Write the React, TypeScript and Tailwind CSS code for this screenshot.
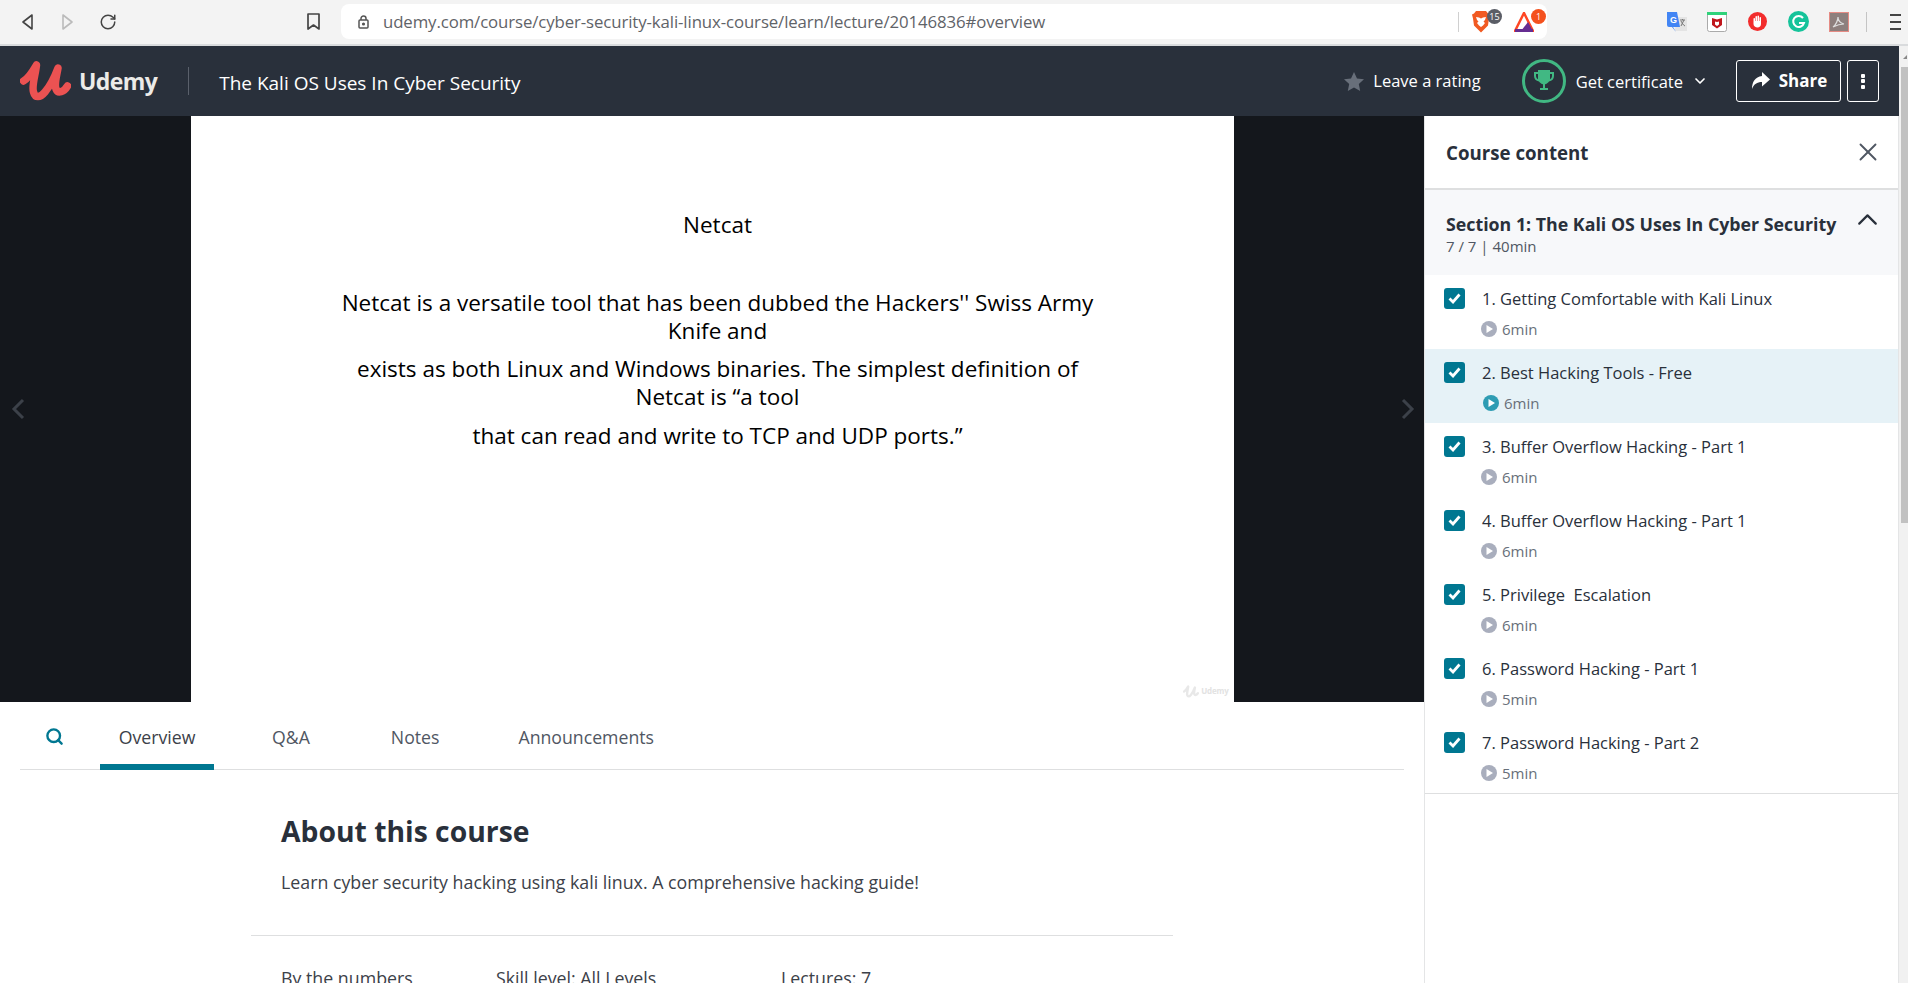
import React from 'react';
import { ChevronDown, ChevronUp, RotateCw, Search, X } from 'lucide-react';

const lectures = [
    { title: '1. Getting Comfortable with Kali Linux', time: '6min' },
    { title: '2. Best Hacking Tools - Free', time: '6min', current: true },
    { title: '3. Buffer Overflow Hacking - Part 1', time: '6min' },
    { title: '4. Buffer Overflow Hacking - Part 1', time: '6min' },
    { title: '5. Privilege  Escalation', time: '6min' },
    { title: '6. Password Hacking - Part 1', time: '5min' },
    { title: '7. Password Hacking - Part 2', time: '5min' },
];

const tabs = [
    { label: 'Q&A', gap: 'ml-[58px]' },
    { label: 'Notes', gap: 'ml-[81px]' },
    { label: 'Announcements', gap: 'ml-[79px]' },
];

// the brush "u" of the logo, also used faded as the video watermark
const LogoMark = ({ size = 51, color = '#ec5252' }: { size?: number; color?: string }) => (
    <svg width={size} height={size * 42 / 51} viewBox="0 0 51 42" fill="none" stroke={color} strokeWidth="7.500" strokeLinecap="round" strokeLinejoin="round">
        <path d="M3.500 21C9 18 13 11 16.500 5C15.500 15 11.500 26 13.500 32C15 38 20 38 25 32C30 26 35 16 38 8C37 15 34 24 36 29C38 34 44 32 47.500 26" />
    </svg>
);

const BrowserBar = () => (
    <div className="h-[46px] shrink-0 flex items-start bg-[#f3f3f3] border-b-2 border-[#d9dbdd] pl-[22px]">
        <div className="flex items-center h-[43px] gap-[29px]">
            <svg width="11" height="16" viewBox="0 0 11 16" fill="none" stroke="#444" strokeWidth="1.6"><path d="M10 1v14L1 8z" strokeLinejoin="round" /></svg>
            <svg width="11" height="16" viewBox="0 0 11 16" fill="none" stroke="#bbb" strokeWidth="1.6"><path d="M1 1v14l9-7z" strokeLinejoin="round" /></svg>
            <RotateCw size={18} color="#444" strokeWidth={2} className="-ml-[3px]" />
        </div>
        <div className="flex items-center h-[43px] ml-[190px]">
            <svg width="13" height="17" viewBox="0 0 13 17" fill="none" stroke="#444" strokeWidth="1.7"><path d="M1 1h11v15l-5.500-4L1 16z" strokeLinejoin="round" /></svg>
        </div>
        <div className="ml-[21px] mt-1 w-[1206px] h-[35px] bg-white rounded-lg flex items-center pl-[17px] relative">
            <svg width="11" height="14" viewBox="0 0 11 14" fill="none" stroke="#555" strokeWidth="1.5"><rect x="1" y="5" width="9" height="8" rx="1" /><path d="M3 5V3.500a2.500 2.500 0 0 1 5 0V5" /><circle cx="5.500" cy="9" r="0.8" fill="#555" /></svg>
            <span className="ml-[14px] text-[16.800px] text-[#5f6368] font-['Open_Sans',sans-serif] tracking-[-0.1px]">udemy.com/course/cyber-security-kali-linux-course/learn/lecture/20146836#overview</span>
            <div className="ml-auto w-px h-[20px] bg-[#d0d0d0] mr-[88px]" />
            <svg className="absolute left-[1131px] top-[6px]" width="18" height="23" viewBox="0 0 18 23">
                <path d="M4 1h10l2 2.500 2 1-1 4-1 7-7 7-7-7-1-7-1-4 2-1z" fill="#f15a22" />
                <path d="M4 7l3 .5 2 1 2-1 3-.5-1 3-1.500 1.500L13 13l-2 2.500-2 1.500-2-1.500L5 13l1.500-1.500L5 10z" fill="#fff" />
            </svg>
            <span className="absolute left-[1146px] top-[5px] w-[15px] h-[15px] rounded-full bg-[#5a5d66] text-white text-[9px] flex items-center justify-center font-['Open_Sans',sans-serif]">15</span>
            <svg className="absolute left-[1173px] top-[8px]" width="20" height="20" viewBox="0 0 20 20">
                <path d="M10 1l9 18H1z" fill="none" stroke="#ff4724" strokeWidth="2.500" />
                <path d="M1 18.500h18" stroke="#662d91" strokeWidth="3" />
                <path d="M14 10l5 9H7z" fill="#662d91" />
            </svg>
            <span className="absolute left-[1190px] top-[5px] w-[15px] h-[15px] rounded-full bg-[#f4511e] text-white text-[9px] flex items-center justify-center font-['Open_Sans',sans-serif]">1</span>
        </div>
        <div className="flex items-center h-[43px] ml-[119px]">
            <svg width="21" height="20" viewBox="0 0 21 20">
                <path d="M10 5h11v14H9z" fill="#e4e4e4" />
                <path d="M1 0h10l3 15H7l3 5-4-5H3a2 2 0 0 1-2-2z" fill="#4285f4" />
                <text x="4" y="10.500" fontSize="9" fill="#fff" fontFamily="'Liberation Sans',sans-serif" fontWeight="700">G</text>
                <path d="M14 8h5M16.500 7v1M15 14l3-6M15 9c1 2 2 4 4 5" stroke="#777" fill="none" strokeWidth="1" />
            </svg>
            <svg className="ml-5" width="20" height="20" viewBox="0 0 20 20">
                <rect x="0.500" y="0.500" width="19" height="19" rx="2" fill="#fff" stroke="#aaa" />
                <rect x="0" y="0" width="20" height="3" fill="#2fd27a" />
                <path d="M5 6l5 1.500L15 6v7l-5 3.500L5 13z" fill="#c0171d" />
                <path d="M8 9.500l2 .5 2-.5v3l-2 1.500-2-1.500z" fill="#fff" />
            </svg>
            <svg className="ml-[21px]" width="19" height="19" viewBox="0 0 19 19">
                <circle cx="9.500" cy="9.500" r="9.500" fill="#f22c2c" />
                <path d="M5.500 6.500a.8.8 0 0 1 1.500 0V9h.5V4.500a.8.8 0 0 1 1.500 0V9h.5V4a.8.8 0 0 1 1.500 0v5h.5V5.500a.8.8 0 0 1 1.500 0V12c0 2-1.500 3.500-3.500 3.500S5.500 14 5.500 12z" fill="#fff" />
            </svg>
            <svg className="ml-[21px]" width="21" height="21" viewBox="0 0 21 21">
                <circle cx="10.500" cy="10.500" r="10.500" fill="#15c39a" />
                <path d="M15 7a5.500 5.500 0 1 0 1 5h-5" fill="none" stroke="#fff" strokeWidth="2" />
            </svg>
            <svg className="ml-5" width="20" height="20" viewBox="0 0 20 20">
                <rect x="0.500" y="0.500" width="19" height="19" fill="#8d7f7d" stroke="#e58b84" />
                <path d="M4 15c3-2 5-7 5-10 0 4 2 6 6 7-4 0-7 1-11 3z" fill="none" stroke="#ddd" strokeWidth="1.200" />
            </svg>
            <div className="ml-[17px] w-px h-[20px] bg-[#c4c4c4]" />
            <div className="ml-[23px] flex flex-col gap-[5px]">
                <div className="w-[11px] h-[2px] bg-[#444]" />
                <div className="w-[11px] h-[2px] bg-[#444]" />
                <div className="w-[11px] h-[2px] bg-[#444]" />
            </div>
        </div>
    </div>
);

const TopBar = () => (
    <div className="h-[70px] shrink-0 bg-[#29303b] flex items-center pl-5 text-white">
        <LogoMark />
        <span className="ml-[8px] text-[23px] font-bold text-[#ecebe8] font-['Open_Sans',sans-serif] tracking-[-0.6px]">Udemy</span>
        <div className="ml-[31px] w-px h-7 bg-[#5a606b]" />
        <span className="ml-[30px] mt-[4px] text-[19px] font-['Open_Sans',sans-serif]">The Kali OS Uses In Cyber Security</span>
        <svg className="ml-auto" width="20" height="19" viewBox="0 0 20 19"><path d="M10 0l3 6.500 7 .8-5.200 4.800 1.400 6.900L10 15.500 3.800 19l1.400-6.900L0 7.300l7-.8z" fill="#686f7a" /></svg>
        <span className="ml-[9px] text-[16.500px] font-['Open_Sans',sans-serif]">Leave a rating</span>
        <div className="ml-[41px] w-[44px] h-[44px] rounded-full border-[3px] border-[#41b883] flex items-center justify-center">
            <svg width="24" height="24" viewBox="0 0 24 24" fill="#41b883"><path d="M6 1h12v2h4v4c0 3-2 5-5 5.500-1 1.500-2.500 2.500-4 2.800V19h3v2H8v-2h3v-3.700c-1.500-.3-3-1.300-4-2.800C4 12 2 10 2 7V3h4zm0 4H4v2c0 1.500 1 2.700 2 3.200zm12 0v5.200c1-.5 2-1.700 2-3.200V5z" /></svg>
        </div>
        <span className="ml-[10px] mt-[2px] text-[16.500px] font-['Open_Sans',sans-serif]">Get certificate</span>
        <ChevronDown size={16} strokeWidth={2.5} className="ml-[9px]" />
        <div className="ml-[28px] w-[105px] h-[42px] border border-white rounded-[3px] flex items-center justify-center">
            <svg width="20" height="18" viewBox="0 0 20 18" fill="#fff"><path d="M12 0l8 7.500-8 7V10c-5 0-8 2-10 7 0-7 3-12 10-13z" /></svg>
            <span className="ml-[9px] text-[17px] font-bold font-['Open_Sans',sans-serif]">Share</span>
        </div>
        <div className="ml-[6px] w-[32px] h-[42px] border border-white rounded-[3px] flex flex-col items-center justify-center gap-[1.500px]">
            <div className="w-1 h-1 bg-white rounded-[1px]" />
            <div className="w-1 h-1 bg-white rounded-[1px]" />
            <div className="w-1 h-1 bg-white rounded-[1px]" />
        </div>
        <div className="w-5" />
    </div>
);

const Slide = () => (
    <div className="h-[586px] shrink-0 bg-[#14171c] flex justify-center relative">
        <div className="absolute left-[11px] top-[282px] text-[#3c4149]"><svg width="14" height="22" viewBox="0 0 14 22" fill="none" stroke="currentColor" strokeWidth="3"><path d="M12 2L3 11l9 9" /></svg></div>
        <div className="absolute right-[9px] top-[282px] text-[#3c4149]"><svg width="14" height="22" viewBox="0 0 14 22" fill="none" stroke="currentColor" strokeWidth="3"><path d="M2 2l9 9-9 9" /></svg></div>
        <div className="w-[1043px] bg-white relative text-center text-black text-[22.500px] leading-[28px] font-['Open_Sans',sans-serif] pt-[95px] pl-[11px]">
            <p>Netcat</p>
            <div className="mx-auto w-[770px] mt-[50px]">
                <p>Netcat is a versatile tool that has been dubbed the Hackers'' Swiss Army Knife and</p>
                <p className="mt-[10px]">exists as both Linux and Windows binaries. The simplest definition of Netcat is “a tool</p>
                <p className="mt-[11px]">that can read and write to TCP and UDP ports.”</p>
            </div>
            <div className="absolute right-[5px] bottom-[4px] flex items-center gap-[2px] opacity-90">
                <LogoMark size={16} color="#e6e6e6" />
                <span className="text-[8px] leading-none font-bold text-[#e0e0e0] tracking-[-0.2px]">Udemy</span>
            </div>
        </div>
    </div>
);

const Tabs = () => (
    <div className="mx-5 h-[68px] border-b border-[#dedfe0] flex items-start font-['Open_Sans',sans-serif] text-[17.700px] text-[#505763]">
        <Search size={19} color="#007791" strokeWidth={3} className="ml-[25px] mt-[25px]" />
        <div className="ml-[36px] w-[114px] h-[68px] border-b-[6px] border-[#007791] flex items-start justify-center pt-[22px] text-[#3c4149]">Overview</div>
        {tabs.map(tab => (
            <div key={tab.label} className={`pt-[22px] ${tab.gap}`}>{tab.label}</div>
        ))}
    </div>
);

const About = () => (
    <div className="font-['Open_Sans',sans-serif] text-[#3c4149]">
        <div className="ml-[281px] mt-[42px] text-[28.300px] leading-[38px] font-bold text-[#29303b]">About this course</div>
        <div className="ml-[281px] mt-[20px] text-[17.800px] leading-[24px]">Learn cyber security hacking using kali linux. A comprehensive hacking guide!</div>
        <div className="ml-[251px] w-[922px] mt-[41px] border-t border-[#dedfe0]" />
        <div className="ml-[281px] mt-[30px] flex text-[17.800px] leading-[24px]">
            <div className="w-[215px]">By the numbers</div>
            <div className="w-[285px]">Skill level: All Levels</div>
            <div>Lectures: 7</div>
        </div>
    </div>
);

const LectureRow = ({ title, time, current }: { title: string; time: string; current?: boolean }) => (
    <div className={`h-[74px] pl-[19px] flex items-start pt-[13px] ${current ? 'bg-[#e6f2f7]' : ''}`}>
        <div className="w-[21px] h-[21px] rounded-[3px] bg-[#007791] flex items-center justify-center shrink-0">
            <svg width="13" height="11" viewBox="0 0 13 11" fill="none" stroke="#fff" strokeWidth="2.800"><path d="M1.500 5.500l3.500 3.500 6.500-7.500" /></svg>
        </div>
        <div className="ml-[17px]">
            <div className="text-[16.500px] leading-[22px] text-[#29303b] whitespace-pre">{title}</div>
            <div className={`flex items-center mt-[10px] text-[15px] leading-[18px] text-[#686f7a] ${current ? 'pl-[1px]' : '-ml-[1px]'}`}>
                <svg width="16" height="16" viewBox="0 0 16 16"><circle cx="8" cy="8" r="8" fill={current ? '#2e9cb3' : '#a9aebd'} /><path d="M5.500 4v8l6.500-4z" fill="#fff" /></svg>
                <span className="ml-[5px]">{time}</span>
            </div>
        </div>
    </div>
);

const Sidebar = () => (
    <div className="w-[475px] shrink-0 border-l border-r border-[#e4e5e6] font-['Open_Sans',sans-serif] flex flex-col">
        <div className="h-[74px] shrink-0 border-b-2 border-[#dedfe0] flex items-center justify-between pl-[21px] pr-[15px]">
            <span className="mt-[2px] text-[18.700px] font-bold text-[#29303b]">Course content</span>
            <X size={30} color="#505763" strokeWidth={1.5} />
        </div>
        <div className="h-[85px] shrink-0 bg-[#f7f8fa] pl-[21px] pr-[22px] pt-[21px] relative">
            <div className="text-[17.800px] leading-[26px] font-bold text-[#29303b] whitespace-nowrap">Section 1: The Kali OS Uses In Cyber Security</div>
            <div className="text-[15px] leading-[18px] text-[#505763]">7 / 7 | 40min</div>
            <ChevronUp size={33} color="#29303b" strokeWidth={1.6} className="absolute right-[14px] top-[13px]" />
        </div>
        <div className="border-b border-[#dedfe0]">
            {lectures.map(l => <LectureRow key={l.title} {...l} />)}
        </div>
    </div>
);

const App: React.FC = () => {
    return (
        <div className="w-[1908px] h-[983px] overflow-hidden bg-white flex flex-col">
            <BrowserBar />
            <div className="flex-1 flex min-h-0">
                <div className="w-[1899px] shrink-0 flex flex-col min-h-0">
                    <TopBar />
                    <div className="flex-1 flex min-h-0">
                        <div className="flex-1 min-w-0">
                            <Slide />
                            <Tabs />
                            <About />
                        </div>
                        <Sidebar />
                    </div>
                </div>
                <div className="flex-1 bg-[#f1f1f1] flex flex-col pl-[2px]">
                    <div className="h-[21px] flex items-center justify-end pr-px">
                        <div className="border-l-[4px] border-l-transparent border-b-[4px] border-b-[#888]" />
                    </div>
                    <div className="h-[456px] bg-[#c1c1c1]" />
                </div>
            </div>
        </div>
    );
};

export default App;
